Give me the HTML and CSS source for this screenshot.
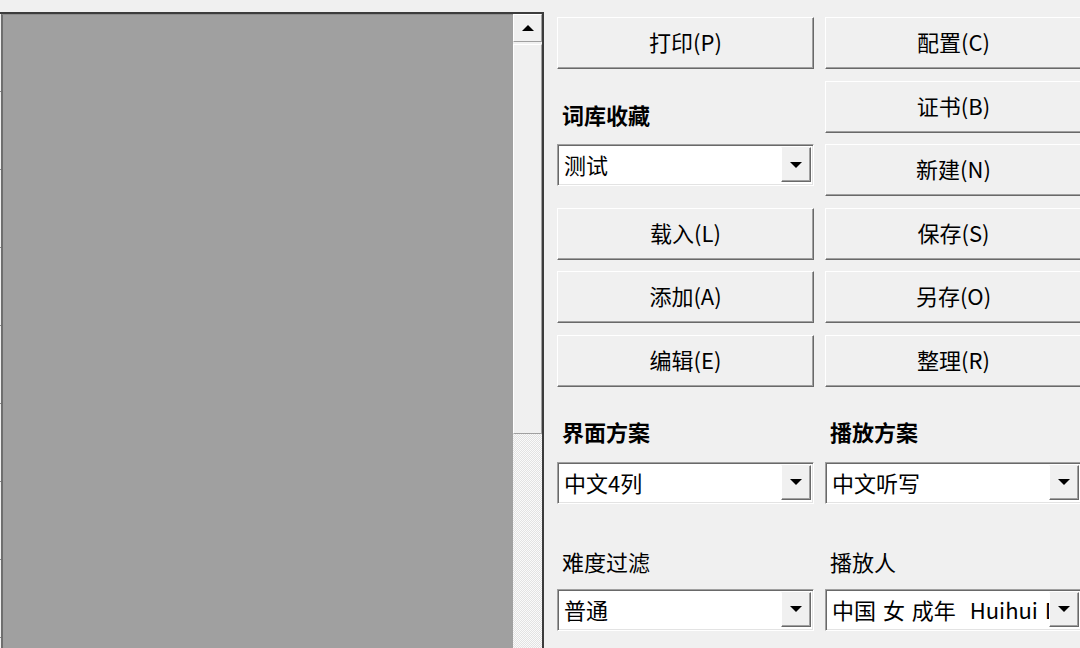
FILE: index.html
```html
<!DOCTYPE html>
<html lang="zh-CN">

<head>
    <meta charset="UTF-8">
    <meta name="viewport" content="width=device-width, initial-scale=1.0">
    <title>听写</title>
    <link rel="stylesheet" href="styles.css">
</head>

<body>
    <div class="window">
        <div class="list-panel">
            <div class="ruler"></div>
            <div class="list"></div>
            <div class="vscroll">
                <div class="sb-btn"><span class="arrow-up"></span></div>
                <div class="sb-thumb"></div>
                <div class="sb-track"></div>
            </div>
        </div>

        <div class="side">
            <!-- 左列 -->
            <button class="btn">打印(P)</button>
            <div class="label head">词库收藏</div>
            <div class="combo">
                <div class="combo-text">测试</div>
                <div class="combo-btn"><span class="arrow-down"></span></div>
            </div>
            <button class="btn">载入(L)</button>
            <button class="btn">添加(A)</button>
            <button class="btn">编辑(E)</button>
            <div class="label head">界面方案</div>
            <div class="combo">
                <div class="combo-text">中文4列</div>
                <div class="combo-btn"><span class="arrow-down"></span></div>
            </div>
            <div class="label">难度过滤</div>
            <div class="combo">
                <div class="combo-text">普通</div>
                <div class="combo-btn"><span class="arrow-down"></span></div>
            </div>

            <!-- 右列 -->
            <button class="btn">配置(C)</button>
            <button class="btn">证书(B)</button>
            <button class="btn">新建(N)</button>
            <button class="btn">保存(S)</button>
            <button class="btn">另存(O)</button>
            <button class="btn">整理(R)</button>
            <div class="label head">播放方案</div>
            <div class="combo">
                <div class="combo-text">中文听写</div>
                <div class="combo-btn"><span class="arrow-down"></span></div>
            </div>
            <div class="label">播放人</div>
            <div class="combo">
                <div class="combo-text voice">中国 女 成年  Huihui Desktop</div>
                <div class="combo-btn"><span class="arrow-down"></span></div>
            </div>
        </div>
    </div>
</body>

</html>
```

FILE: styles.css
```css
body {
    margin: 0;
    padding: 0;
    background-color: #f0f0f0;
    overflow: hidden;
    font-family: "Noto Sans CJK SC", "Noto Sans", sans-serif;
    font-size: 22px;
    color: #000;
}

.window {
    display: flex;
    height: 648px;
}

/* 左侧列表 */
.list-panel {
    flex-shrink: 0;
    width: 542px;
    margin-top: 12px;
    display: flex;
    border-top: 2px solid #3c3c3c;
    border-right: 2px solid #3c3c3c;
}

.ruler {
    width: 1px;
    background: repeating-linear-gradient(#f0f0f0 0 77px, #8a8a8a 77px 78px);
}

.list {
    flex: 1;
    background-color: #a0a0a0;
    border-left: 2px solid #6e6e6e;
    border-top: 1px solid #8c8c8c;
}

.vscroll {
    width: 29px;
    display: flex;
    flex-direction: column;
    background-color: #f0f0f0;
}

.sb-btn {
    height: 28px;
    box-sizing: border-box;
    border: 1px solid;
    border-color: #fff #a0a0a0 #a0a0a0 #fff;
    display: flex;
    align-items: center;
    justify-content: center;
}

.arrow-up {
    width: 0;
    height: 0;
    border-left: 6px solid transparent;
    border-right: 6px solid transparent;
    border-bottom: 6px solid #000;
}

.sb-thumb {
    height: 390px;
    margin-top: 2px;
    box-sizing: border-box;
    border: 1px solid;
    border-color: #fff #a0a0a0 #a0a0a0 #fff;
    background-color: #f0f0f0;
}

.sb-track {
    flex: 1;
    background: repeating-conic-gradient(#fafafa 0 25%, #e2e2e2 0 50%) 0 0 / 2px 2px;
}

/* 右侧按钮区 */
.side {
    flex-shrink: 0;
    padding: 17px 0 0 13px;
    display: grid;
    grid-auto-flow: column;
    grid-template-rows: repeat(10, 52px);
    grid-template-columns: 257px 257px;
    column-gap: 11px;
    row-gap: 11.5px;
}

.btn {
    margin: 0;
    padding: 0 0 4px;
    font: inherit;
    color: #000;
    background-color: #f0f0f0;
    border: 1px solid;
    border-color: #fff #696969 #696969 #fff;
    box-shadow: inset -1px -1px #a0a0a0;
}

.label {
    align-self: end;
    margin: 0 0 1px 5px;
    line-height: 30px;
}

.head {
    font-weight: bold;
    margin-bottom: 4px;
}

.combo {
    align-self: start;
    height: 42px;
    box-sizing: border-box;
    display: flex;
    padding: 2px 2px 0 0;
    background-color: #fff;
    border: 1px solid;
    border-color: #a0a0a0 #fff #fff #a0a0a0;
    box-shadow: inset 1px 1px #696969, inset -1px -1px #e3e3e3;
}

.combo-text {
    flex: 1;
    overflow: hidden;
    white-space: pre;
    padding-left: 6px;
    line-height: 34px;
}

.voice {
    word-spacing: 2px;
}

.combo-btn {
    width: 30px;
    height: 35px;
    box-sizing: border-box;
    background-color: #f0f0f0;
    border: 1px solid;
    border-color: #f0f0f0 #696969 #696969 #fff;
    box-shadow: inset -1px -1px #a0a0a0;
    display: flex;
    align-items: center;
    justify-content: center;
}

.arrow-down {
    width: 0;
    height: 0;
    border-left: 6px solid transparent;
    border-right: 6px solid transparent;
    border-top: 6px solid #000;
}
```
